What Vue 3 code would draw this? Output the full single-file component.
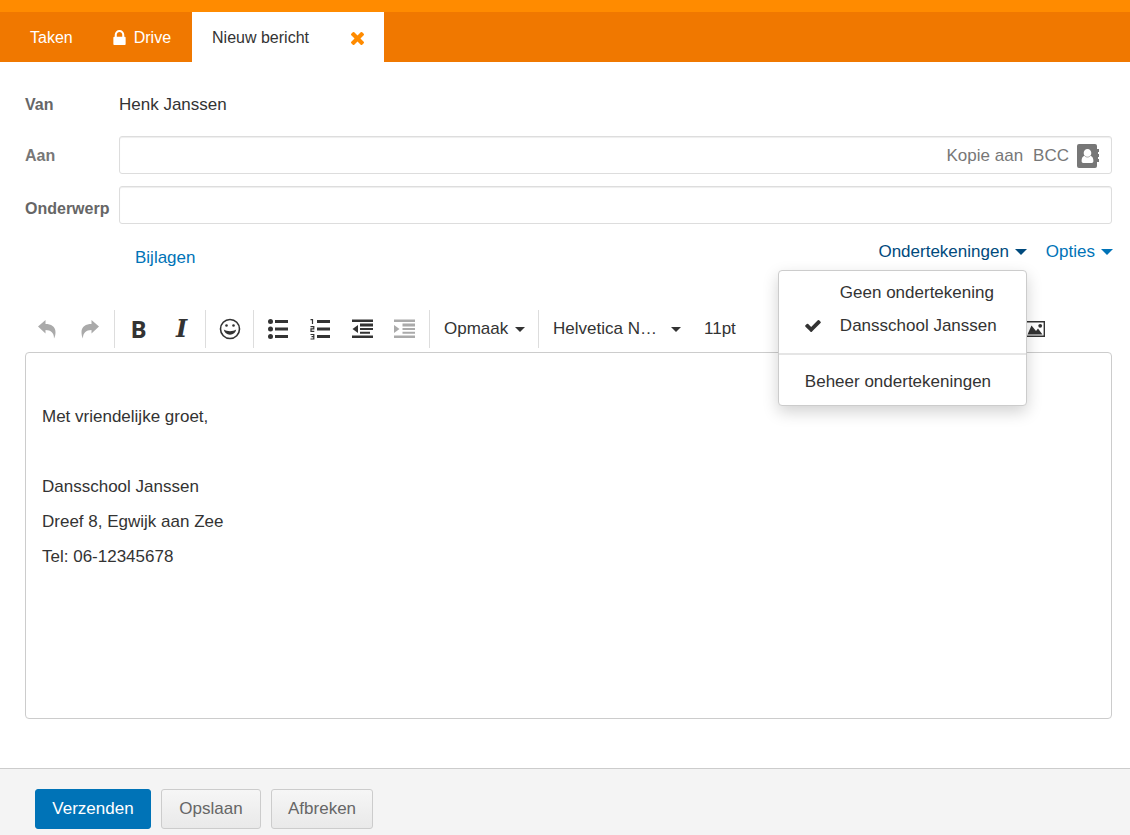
<script setup>
import { ref } from 'vue'

const to = ref('')
const subject = ref('')
const signatures = ['Geen ondertekening', 'Dansschool Janssen']
const active = ref('Dansschool Janssen')
</script>

<template>
  <div class="page">
    <header class="top">
      <nav class="tabs">
        <a href="#" class="tab">Taken</a>
        <a href="#" class="tab drive">
          <svg class="lock" viewBox="0 128 1152 1408" aria-hidden="true"><path fill="currentColor" d="M320 768h512v-192q0-106-75-181t-181-75-181 75-75 181v192zm832 96v576q0 40-28 68t-68 28h-960q-40 0-68-28t-28-68v-576q0-40 28-68t68-28h32v-192q0-184 132-316t316-132 316 132 132 316v192h32q40 0 68 28t28 68z" /></svg>
          Drive
        </a>
        <div class="tab current">
          <span>Nieuw bericht</span>
          <button type="button" class="close" aria-label="Sluiten">
            <svg viewBox="302 366 1188 1188" aria-hidden="true"><path fill="currentColor" d="M1490 1322q0 40-28 68l-136 136q-28 28-68 28t-68-28l-294-294-294 294q-28 28-68 28t-68-28l-136-136q-28-28-28-68t28-68l294-294-294-294q-28-28-28-68t28-68l136-136q28-28 68-28t68 28l294 294 294-294q28-28 68-28t68 28l136 136q28 28 28 68t-28 68l-294 294 294 294q28 28 28 68z" /></svg>
          </button>
        </div>
      </nav>
    </header>

    <main class="compose">
      <div class="row from">
        <span class="label">Van</span>
        <span>Henk Janssen</span>
      </div>
      <div class="row recipients">
        <label class="label" for="to">Aan</label>
        <div class="field">
          <input id="to" v-model="to" type="text" />
          <button type="button" class="extra">Kopie aan</button>
          <button type="button" class="extra">BCC</button>
          <button type="button" class="extra book" aria-label="Adresboek">
            <svg viewBox="0 0 22 24" aria-hidden="true">
              <path fill="currentColor" d="M2 0h16q2 0 2 2v3h2v3h-1v2h1v3h-1v2h1v3h-2v4q0 2-2 2H2q-2 0-2-2V2Q0 0 2 0z" />
              <path fill="#fff" d="M10.500 5c2.300 0 3.800 1.700 3.800 4 0 1-.3 2-.8 2.700 2 .6 2.900 2.300 2.900 5.300 0 1.300-.6 2-1.700 2H6.300c-1.100 0-1.700-.7-1.700-2 0-3 .9-4.700 2.900-5.300-.5-.7-.8-1.700-.8-2.700 0-2.300 1.500-4 3.800-4z" />
              <path fill="none" stroke="currentColor" stroke-width=".6" d="M7.500 11.600c1.700 2 4.300 2 6 0" />
            </svg>
          </button>
        </div>
      </div>
      <div class="row subject">
        <label class="label" for="subject">Onderwerp</label>
        <div class="field"><input id="subject" v-model="subject" type="text" /></div>
      </div>

      <div class="actions">
        <a href="#" class="attach">Bijlagen</a>
        <div class="dropdown">
          <button type="button" class="link open" aria-haspopup="menu" aria-expanded="true">
            Ondertekeningen<i class="caret"></i>
          </button>
          <div class="menu" role="menu">
            <button
              v-for="s in signatures"
              :key="s"
              type="button"
              class="item"
              role="menuitemradio"
              :aria-checked="s === active"
              @click="active = s"
            >
              <span class="tick">
                <svg v-if="s === active" viewBox="121 334 1550 1188" aria-hidden="true"><path fill="currentColor" d="M1671 566q0 40-28 68l-724 724-136 136q-28 28-68 28t-68-28l-136-136-362-362q-28-28-28-68t28-68l136-136q28-28 68-28t68 28l294 295 656-657q28-28 68-28t68 28l136 136q28 28 28 68z" /></svg>
              </span>{{ s }}
            </button>
            <hr class="divider" />
            <button type="button" class="item" role="menuitem">Beheer ondertekeningen</button>
          </div>
        </div>
        <button type="button" class="link" aria-haspopup="menu">Opties<i class="caret"></i></button>
      </div>

      <div class="toolbar" role="toolbar" aria-label="Opmaak">
        <div class="group history">
          <button type="button" class="tool" disabled aria-label="Ongedaan maken">
            <svg class="arrow" viewBox="0 0 18 20"><path fill="currentColor" d="M0 7.500L7.500 1v4C13 5 17.500 7.500 17.500 13c0 2.500-.4 4.500-1.500 6.500.2-5.500-3-8.500-8.500-8.500v3.500z" /></svg>
          </button>
          <button type="button" class="tool" disabled aria-label="Opnieuw">
            <svg class="arrow" viewBox="0 0 18 20"><path fill="currentColor" d="M18 7.500L10.500 1v4C5 5 .5 7.500 .5 13c0 2.500.4 4.500 1.500 6.500-.2-5.500 3-8.500 8.500-8.500v3.500z" /></svg>
          </button>
        </div>
        <div class="group">
          <button type="button" class="tool bold" aria-label="Vet">B</button>
          <button type="button" class="tool italic" aria-label="Cursief">I</button>
        </div>
        <div class="group">
          <button type="button" class="tool" aria-label="Emoji">
            <svg class="smile" viewBox="0 0 22 22">
              <circle cx="11" cy="11" r="9.500" fill="none" stroke="currentColor" stroke-width="1.600" />
              <circle cx="7.500" cy="7.500" r="1.300" fill="currentColor" />
              <circle cx="14.500" cy="7.500" r="1.300" fill="currentColor" />
              <path fill="currentColor" d="M4.800 11.500c3.500 2.200 8.900 2.200 12.400 0-.6 3.400-3 5.200-6.200 5.200s-5.600-1.800-6.200-5.200z" />
            </svg>
          </button>
        </div>
        <div class="group lists">
          <button type="button" class="tool" aria-label="Opsomming">
            <svg viewBox="0 0 22 22" fill="currentColor"><circle cx="3.500" cy="3.500" r="2.500" /><circle cx="3.500" cy="11" r="2.500" /><circle cx="3.500" cy="18.500" r="2.500" /><path d="M8 2h13v3H8zM8 9.500h13v3H8zM8 17h13v3H8z" /></svg>
          </button>
          <button type="button" class="tool" aria-label="Genummerde lijst">
            <svg viewBox="0 0 22 22" fill="currentColor">
              <path d="M8 2h13v3H8zM8 9.500h13v3H8zM8 17h13v3H8z" />
              <path fill="none" stroke="currentColor" stroke-width="1.200" d="M1.500 1.600H3.500V6M1.500 8.600H4.800V10.800H2V13.400H5.300M1.500 16.500H4.800V21H1.500M2.500 18.700H4.800" />
            </svg>
          </button>
          <button type="button" class="tool" aria-label="Inspringing verkleinen">
            <svg viewBox="0 0 22 22" fill="currentColor"><path d="M1 1.500h21V4H1zM9 5.500h13v3H9zM9 10h13v2H9zM9 13.800h10v2H9zM1 17.500h21V20H1zM7 7v8L1.500 11z" /></svg>
          </button>
          <button type="button" class="tool" disabled aria-label="Inspringing vergroten">
            <svg viewBox="0 0 22 22" fill="currentColor"><path d="M1 1.500h21V4H1zM9.500 5.500H22v3H9.500zM9.500 10H22v2H9.500zM9.500 13.800H22v2H9.500zM1 17.500h21V20H1zM1 7v8l5.500-4z" /></svg>
          </button>
        </div>
        <div class="group choice format">
          <select aria-label="Opmaak"><option>Opmaak</option></select><i class="caret"></i>
        </div>
        <div class="group choice font">
          <select aria-label="Lettertype"><option>Helvetica N…</option></select><i class="caret"></i>
          <select class="size" aria-label="Tekengrootte"><option>11pt</option></select>
        </div>
        <button type="button" class="image" aria-label="Afbeelding">
          <svg viewBox="0 0 20 16"><path fill="none" stroke="currentColor" stroke-width="1.400" d="M.7.7h18.600v14.600H.7z" /><path fill="currentColor" d="M2.500 13.500L6.500 4.500l4.500 5.500 2-2.500 4.500 6z" /><circle cx="15.200" cy="4.800" r="1.900" fill="currentColor" /></svg>
        </button>
      </div>

      <div class="editor" contenteditable="true" role="textbox" aria-multiline="true" aria-label="Bericht">
        <p><br /></p>
        <p>Met vriendelijke groet,</p>
        <p><br /></p>
        <p>Dansschool Janssen</p>
        <p>Dreef 8, Egwijk aan Zee</p>
        <p>Tel: 06-12345678</p>
      </div>
    </main>

    <footer class="footer">
      <button type="button" class="btn primary">Verzenden</button>
      <button type="button" class="btn">Opslaan</button>
      <button type="button" class="btn">Afbreken</button>
    </footer>
  </div>
</template>

<style>
body {
  margin: 0;
}
</style>

<style scoped>
.page,
.page * {
  box-sizing: border-box;
}
.page {
  display: flex;
  flex-direction: column;
  min-height: 100vh;
  background: #fff;
  color: #333;
  font: 17px/24px "Liberation Sans", Arial, sans-serif;
}
button,
input,
select {
  margin: 0;
  padding: 0;
  border: 0;
  background: none;
  color: inherit;
  font: inherit;
}
a {
  text-decoration: none;
}
svg {
  display: block;
}
.top {
  border-top: 12px solid #ff8b00;
  background: #f07800;
}
.tabs {
  display: flex;
  height: 50px;
  padding-left: 10px;
  font-size: 16px;
}
.tab {
  display: flex;
  align-items: center;
  padding: 2px 20px 0;
  color: #fff;
}
.drive {
  gap: 8px;
  padding-right: 21px;
}
.lock {
  width: 13px;
  height: 15px;
  margin-bottom: 2px;
}
.current {
  justify-content: space-between;
  width: 192px;
  background: #fff;
  color: #333;
}
.close {
  color: #ff8b00;
}
.close svg {
  width: 13px;
  height: 13px;
}
.compose {
  flex: 1;
  display: flex;
  flex-direction: column;
  padding: 24px 18px 49px 25px;
}
.row {
  display: grid;
  grid-template-columns: 94px 1fr;
  align-items: center;
  margin-bottom: 12px;
}
.from {
  height: 38px;
}
.label {
  color: #666;
  font-size: 16px;
  font-weight: bold;
}
.recipients .label {
  padding-top: 2px;
  color: #777;
}
.subject .label {
  padding-top: 8px;
}
.field {
  display: flex;
  align-items: center;
  height: 38px;
  padding: 2px 12px 0;
  border: 1px solid #ddd;
  border-radius: 3px;
  box-shadow: inset 0 1px 1px rgba(0, 0, 0, 0.07);
}
.field input {
  flex: 1;
  min-width: 0;
  height: 100%;
  outline: 0;
}
.extra {
  margin-left: 10px;
  color: #777;
}
.book {
  margin-left: 8px;
}
.book svg {
  width: 22px;
  height: 24px;
}
.actions {
  display: flex;
  align-items: flex-start;
  gap: 19px;
  height: 70px;
  margin-right: -1px;
  padding-top: 4px;
}
.attach {
  margin: 6px auto 0 110px;
  color: #0073b7;
}
.link {
  display: flex;
  align-items: center;
  gap: 6px;
  color: #0073b7;
}
.open {
  color: #004a7d;
}
.caret {
  flex: none;
  border: solid transparent;
  border-width: 5px 5px 0;
  border-top-color: currentColor;
}
.link .caret {
  border-width: 6px 6px 0;
}
.dropdown {
  position: relative;
}
.menu {
  position: absolute;
  z-index: 2;
  top: 30px;
  right: 0;
  width: 249px;
  padding: 5px 0 7px;
  border: 1px solid #ccc;
  border-radius: 4px;
  background: #fff;
  box-shadow: 0 6px 16px rgba(0, 0, 0, 0.18);
}
.item {
  display: flex;
  align-items: center;
  width: 100%;
  height: 33px;
  padding-left: 26px;
  white-space: nowrap;
}
.tick {
  width: 35px;
}
.tick svg {
  width: 16px;
  height: 12px;
}
.divider {
  height: 2px;
  margin: 11px 0 10px;
  border: 0;
  background: #e5e5e5;
}
.toolbar {
  display: flex;
  align-items: center;
  height: 46px;
}
.group {
  display: flex;
  align-items: center;
  height: 38px;
  padding: 0 2px;
  border-right: 1px solid #ddd;
}
.group.history {
  padding: 0 3px 0 0;
}
.tool {
  display: flex;
  align-items: center;
  justify-content: center;
  width: 43px;
  height: 38px;
}
.tool:disabled {
  color: #aaa;
}
.tool svg {
  width: 22px;
  height: 22px;
}
.tool svg.arrow {
  width: 18px;
  height: 20px;
}
.bold {
  font: bold 24px/24px "Open Sans", sans-serif;
}
.italic {
  font: italic bold 24px/24px "DejaVu Serif", serif;
}
.group.lists {
  padding: 0 4px 0 3px;
}
.lists .tool {
  width: 42px;
}
.group.choice {
  padding: 0 14px;
}
.choice select {
  width: 66px;
  appearance: none;
}
.choice.format {
  gap: 5px;
  padding-right: 13px;
}
.choice.font {
  gap: 12px;
  border-right: 0;
}
.font select {
  width: 106px;
}
.font .size {
  width: 40px;
  margin-left: 11px;
}
.image {
  margin: 0 67px 0 auto;
}
.image svg {
  width: 20px;
  height: 16px;
}
.editor {
  flex: 1;
  padding: 11px 16px;
  border: 1px solid #ccc;
  border-radius: 4px;
  outline: 0;
}
.editor p {
  margin: 0;
  line-height: 35px;
}
.footer {
  display: flex;
  gap: 10px;
  padding: 20px 35px 6px;
  border-top: 1px solid #ccc;
  background: #f4f4f4;
}
.btn {
  min-width: 100px;
  height: 40px;
  padding: 0 16px;
  border: 1px solid #ccc;
  border-radius: 3px;
  background: linear-gradient(#f6f6f6, #e9e9e9);
  color: #666;
}
.primary {
  min-width: 116px;
  border-color: #0073b7;
  background: #0073b7;
  color: #fff;
}
</style>
